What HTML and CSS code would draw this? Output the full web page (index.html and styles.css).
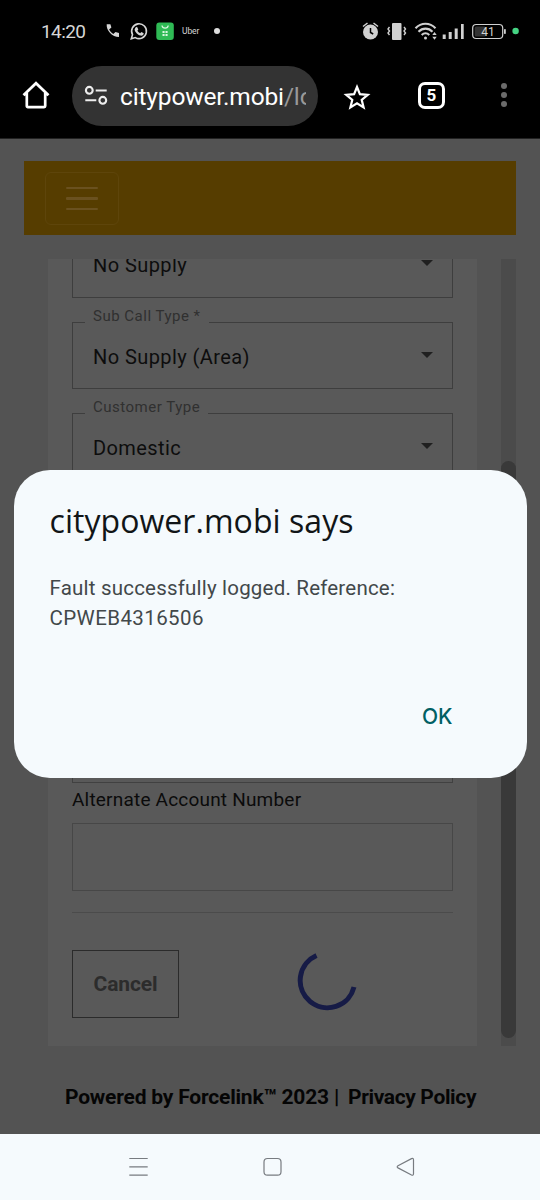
FILE: index.html
```html
<!DOCTYPE html>
<html lang="en">
<head>
<meta charset="utf-8">
<title>citypower.mobi</title>
<link rel="stylesheet" href="styles.css">
</head>
<body>
<div class="phone">
  <header class="status">
    <span class="clock">14:20</span>
    <svg class="status-left" width="72" height="20" viewBox="0 0 72 20">
      <path d="M2.700 3.200c-.5 6.500 5.500 12.600 12.300 12.800v-4.100l-3.500-.9-2.200 2c-1.800-1-3.300-2.700-4.200-4.400l2.300-2-1-3.400z" fill="#d6d6d6"/>
      <path d="M27.300 17.800l1.200-4.100a7.400 7.400 0 1 1 2.800 2.900z" fill="none" stroke="#d6d6d6" stroke-width="1.600"/>
      <path d="M31.500 6.500l1.500-.7 1.300 2.700-.9 1.200c.7 1.200 1.600 2 2.800 2.500l1.200-1.200 2.300 1.300c0 2-1.700 2.700-3.300 2.200-2.700-.8-5.500-3.500-5.800-6.100z" fill="#d6d6d6"/>
      <rect x="52.300" y="1.500" width="17.500" height="17.500" rx="3" fill="#2fba55"/>
      <path d="M58 4.500c.5 3.600 5.700 3.600 6.200 0" fill="none" stroke="#d9f6df" stroke-width="1.300"/>
      <path d="M58.500 10h2.100v2.100h-2.100zM61.500 10h2.100v2.100h-2.100zM58.500 13h2.100v2.100h-2.100zM61.500 13h2.100v2.100h-2.100z" fill="#d9f6df"/>
    </svg>
    <span class="uber">Uber</span>
    <span class="dot"></span>
    <svg class="status-right" width="164" height="22" viewBox="0 0 164 22">
      <g fill="#d0d0d0">
        <circle cx="10.500" cy="12" r="7.500"/>
        <path d="M3 6.500l4.500-3.500M18 6.500L13.500 3" stroke="#d0d0d0" stroke-width="1.500"/>
        <path d="M10.500 8v4.500l2.700 1.500" fill="none" stroke="#000" stroke-width="1.500"/>
        <rect x="32" y="3" width="9.500" height="17" rx="1"/>
        <path d="M29.500 7l-1.500 2 1.500 2-1.500 2 1.500 2M44 7l1.500 2-1.500 2 1.500 2-1.500 2" fill="none" stroke="#d0d0d0" stroke-width="1.400"/>
        <path d="M55.500 8.200c5.700-5.900 14.300-5.900 20 0M58.500 11.700c4-4.100 10-4.100 14 0M61.700 15c2.300-2.400 5.300-2.400 7.600 0" fill="none" stroke="#d0d0d0" stroke-width="2.100"/>
        <circle cx="65.500" cy="18" r="1.500"/>
        <path d="M72.300 15l2.200-3 2.200 3zM72.300 16.700l2.200 3 2.200-3z"/>
        <path d="M82.700 14.500h3v4.500h-3zM88.700 12h3v7h-3zM94.700 8.500h3V19h-3zM101 4h2.700v15H101z"/>
        <rect x="112.700" y="4.500" width="30" height="14" rx="3.500" fill="none" stroke="#d0d0d0" stroke-width="1.200"/>
        <rect x="114.700" y="6.500" width="11" height="10" rx="1.500" fill="#333"/>
        <rect x="144" y="9" width="1.800" height="5" rx=".8"/>
      </g>
      <text class="battery" x="128" y="15.500" text-anchor="middle">41</text>
      <circle cx="155.600" cy="11" r="3.200" fill="#45d383"/>
    </svg>
  </header>

  <nav class="browser">
    <svg class="home" width="30" height="30" viewBox="0 0 30 30"><path d="M2.500 15.300L15 3.200l12.500 12.100M5.800 13v13.100a1.100 1.100 0 0 0 1.100 1.100h16.200a1.100 1.100 0 0 0 1.100-1.100V13" fill="none" stroke="#fff" stroke-width="2.700"/></svg>
    <div class="address">
      <svg width="24" height="22" viewBox="0 0 24 22" fill="none" stroke="#eee" stroke-width="2.100"><circle cx="5.300" cy="5.300" r="3.400"/><path d="M11.700 5.500h11M1.300 15.300h11"/><circle cx="18.800" cy="15.300" r="3.400"/></svg>
      <div class="url">citypower.mobi<span>/lo</span></div>
    </div>
    <svg class="star" width="28" height="28" viewBox="0 0 28 28"><path d="M14 4l2.900 7.200 7.800.6-6 5 1.900 7.600L14 20.300l-6.600 4.100 1.900-7.600-6-5 7.800-.6z" fill="none" stroke="#fff" stroke-width="2.200"/></svg>
    <span class="tabs">5</span>
    <span class="more"><i></i><i></i><i></i></span>
  </nav>

  <main class="page">
    <div class="brandbar"><div class="toggle"><i></i><i></i><i></i></div></div>
    <div class="scroller">
      <form class="card">
        <div class="field first"><span class="value supply">No Supply</span><i class="arrow"></i></div>
        <div class="field"><span class="legend sub">Sub Call Type *</span><span class="value area">No Supply (Area)</span><i class="arrow"></i></div>
        <div class="field"><span class="legend cust">Customer Type</span><span class="value dom">Domestic</span><i class="arrow"></i></div>
        <div class="input prev"></div>
        <label class="label"><span>Alternate Account Number</span></label>
        <div class="input"></div>
        <hr class="rule">
        <div class="actions">
          <div class="cancel"><span>Cancel</span></div>
          <svg class="spinner" width="62" height="62" viewBox="0 0 62 62"><path d="M19.500 5.500A27.300 27.300 0 1 0 57 37" fill="none" stroke="#161b46" stroke-width="5"/></svg>
        </div>
      </form>
      <div class="track"><div class="thumb"></div></div>
    </div>
    <footer class="footer"><span class="powered">Powered by Forcelink™ 2023 |</span><span class="privacy">Privacy Policy</span></footer>
  </main>

  <div class="system">
    <svg width="540" height="66" viewBox="0 0 540 66" fill="none" stroke="#777b80" stroke-width="1.200">
      <path d="M129.300 24.500h18.400M129.300 32.900h18.400M129.300 41.200h18.400"/>
      <rect x="264" y="24.500" width="17" height="16.700" rx="3.500"/>
      <path d="M398 31.800l13.500-7.200q2-.8 2 1.200v14q0 2-2 1.200L398 33.900q-1.600-1 0-2.100z"/>
    </svg>
  </div>

  <section class="dialog">
    <h1><span>citypower.mobi says</span></h1>
    <p><span class="line1">Fault successfully logged. Reference:</span><br><span class="line2">CPWEB4316506</span></p>
    <div class="ok"><span>OK</span></div>
  </section>
</div>
</body>
</html>
```
FILE: styles.css
```css
* { box-sizing: border-box; }
body { margin: 0; background: #000; font-family: Roboto, sans-serif; }
.phone { position: relative; width: 540px; height: 1200px; display: flex; flex-direction: column; overflow: hidden; }

.status { height: 62px; flex: none; display: flex; align-items: center; padding-left: 41px; color: #d6d6d6; }
.clock { width: 63px; font-size: 19px; letter-spacing: -.6px; }
.status-left { flex: none; }
.uber { margin-left: 6px; width: 31px; font-size: 8.500px; letter-spacing: -.1px; }
.dot { width: 6px; height: 6px; border-radius: 50%; background: #ddd; margin-left: 1px; }
.status-right { margin-left: 140px; flex: none; }
.battery { font: 12px Roboto, sans-serif; fill: #d0d0d0; }

.browser { height: 77px; flex: none; display: flex; align-items: flex-start; padding: 4px 0 0 21px; border-bottom: 1px solid #222; }
.home { margin-top: 14px; flex: none; }
.address { width: 246px; height: 60px; margin-left: 21px; padding: 0 12px; border-radius: 30px; background: #333; display: flex; align-items: center; flex: none; }
.address svg { flex: none; }
.url { margin: 2px 0 0 12px; width: 187px; overflow: hidden; white-space: nowrap; font-size: 24.500px; line-height: 36px; letter-spacing: -.15px; color: #fff; }
.url span { color: #999; }
.star { margin: 17px 0 0 25px; flex: none; }
.tabs { width: 27px; height: 27px; margin: 16px 0 0 47px; border: 3px solid #fff; border-radius: 7px; color: #fff; font: bold 17px/21px Roboto, sans-serif; text-align: center; }
.more { margin: 17px 0 0 56px; display: flex; flex-direction: column; gap: 3px; }
.more i { width: 6px; height: 6px; border-radius: 50%; background: #6b6b6b; }

.page { height: 995px; flex: none; background: #535353; display: flex; flex-direction: column; padding: 22.4px 24px 0; }
.brandbar { height: 74px; flex: none; padding: 10.500px 0 0 21px; background: #563d00; }
.toggle { width: 74px; height: 53px; border: 1.500px solid #5e450b; border-radius: 6px; display: flex; flex-direction: column; align-items: center; justify-content: center; gap: 8px; }
.toggle i { width: 32px; height: 2.600px; background: #6a511f; border-radius: 1px; }
.scroller { height: 786.500px; margin-top: 24px; flex: none; display: flex; overflow: hidden; }
.card { width: 429px; margin-left: 24px; padding: 0 24px; background: #595959; display: flex; flex-direction: column; }
.field { position: relative; height: 67.500px; margin-bottom: 24px; flex: none; border: 1.500px solid #3e3e3e; padding: 2px 19px 0 20px; display: flex; align-items: center; justify-content: space-between; color: #0d0d0d; font-size: 20px; }
.first { margin-top: -29px; }
.value { white-space: nowrap; letter-spacing: .42px; }
.legend { position: absolute; left: 12px; top: -17px; padding: 0 8px; background: #595959; color: #303030; font-size: 15px; line-height: 20px; letter-spacing: .5px; white-space: nowrap; }
.arrow { border: 6.500px solid transparent; border-top-color: #202020; border-bottom: 0; transform: translateY(-2px); }
.input { height: 67.500px; flex: none; border: 1.500px solid #474747; }
.prev { margin-top: auto; border-color: #414141; }
.label { height: 40.500px; flex: none; padding-top: 5px; font-size: 19px; line-height: 24px; color: #0b0b0b; letter-spacing: .2px; }
.rule { width: 100%; height: 1px; margin: 21px 0 37px; border: 0; background: #4b4b4b; flex: none; }
.actions { display: flex; height: 96px; flex: none; }
.cancel { width: 107px; height: 68px; border: 1.500px solid #2b2b2b; display: flex; align-items: center; justify-content: center; color: #2c2c2c; font-weight: bold; font-size: 21px; letter-spacing: -.1px; }
.spinner { margin-left: 118px; }
.track { width: 15px; margin-left: 24px; background: #4b4b4b; padding-top: 202px; }
.thumb { height: 577px; background: #393939; border-radius: 7.500px; }
.footer { padding: 37px 0 0 41px; font-weight: bold; font-size: 21px; line-height: 28px; color: #050505; white-space: nowrap; display: flex; gap: 9px; }
.powered { letter-spacing: -.2px; }
.privacy { letter-spacing: -.36px; }

.system { height: 66px; background: #f5fafd; flex: none; }
.system svg { display: block; }

.dialog { position: absolute; left: 13.500px; top: 470px; width: 513px; height: 307.500px; padding: 31px 36px 0; border-radius: 36px; background: #f5fafd; }
.dialog h1 { margin: 0; font: 400 32px/40px "Open Sans", Roboto, sans-serif; letter-spacing: .05px; color: #111517; white-space: nowrap; }
.dialog p { margin: 32px 0 0; font-size: 20.500px; line-height: 30px; letter-spacing: .2px; color: #42484a; white-space: nowrap; }
.line2 { letter-spacing: .4px; }
.ok { display: flex; justify-content: flex-end; margin: 69px 38px 0 0; font: 500 21px/30px Inter, sans-serif; color: #006064; }
```
